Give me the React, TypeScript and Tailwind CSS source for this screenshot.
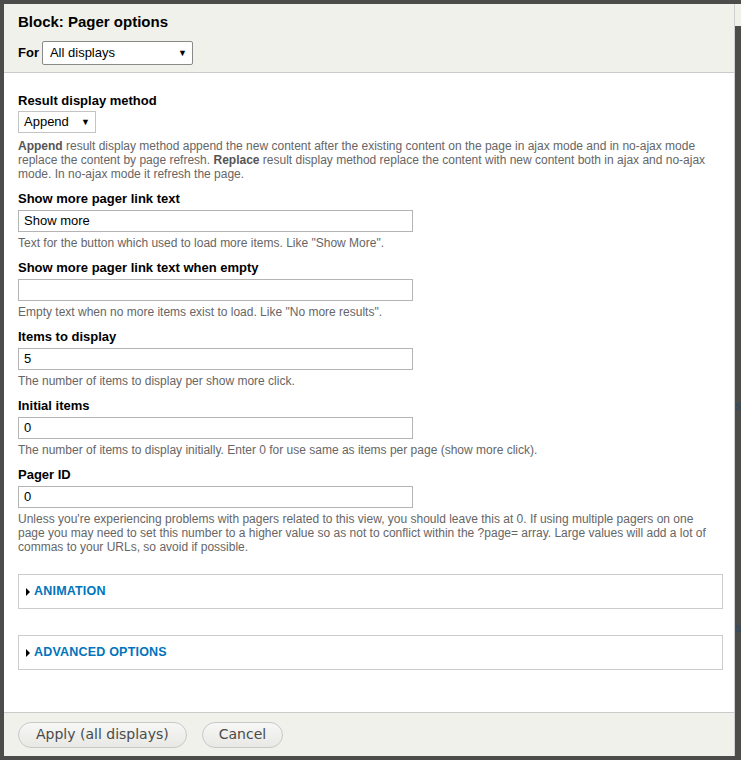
import React from 'react';

type Field = { label: string; value: string; help: string };

const FIELDS: Field[] = [
  { label: 'Show more pager link text', value: 'Show more', help: 'Text for the button which used to load more items. Like "Show More".' },
  { label: 'Show more pager link text when empty', value: '', help: 'Empty text when no more items exist to load. Like "No more results".' },
  { label: 'Items to display', value: '5', help: 'The number of items to display per show more click.' },
  { label: 'Initial items', value: '0', help: 'The number of items to display initially. Enter 0 for use same as items per page (show more click).' },
  {
    label: 'Pager ID',
    value: '0',
    help: "Unless you're experiencing problems with pagers related to this view, you should leave this at 0. If using multiple pagers on one page you may need to set this number to a higher value so as not to conflict within the ?page= array. Large values will add a lot of commas to your URLs, so avoid if possible.",
  },
];

function Caret() {
  return <span className="text-[9px] leading-none">▼</span>;
}

function TextField({ field }: { field: Field }) {
  return (
    <div className="mb-[10px]">
      <label className="block text-[13px] font-bold leading-[16px] text-black mb-[3px]">{field.label}</label>
      <div className="w-[395px] h-[22px] border border-[#b4b4b4] bg-white px-[5px] flex items-center text-[13px] text-black">
        {field.value}
      </div>
      <p className="mt-[4px] text-[12px] leading-[14px] text-[#666]">{field.help}</p>
    </div>
  );
}

function Collapsed({ title }: { title: string }) {
  return (
    <div className="h-[35px] border border-[#ccc] flex items-center pl-[7px] gap-[4px]">
      <span className="w-0 h-0 border-y-[4px] border-y-transparent border-l-[4px] border-l-black" />
      <span className="text-[12.5px] font-bold text-[#0074bd] tracking-[0.2px]">{title}</span>
    </div>
  );
}

export default function App() {
  return (
    <div className="relative w-[741px] h-[760px] bg-[#4c4c4a] overflow-hidden" style={{ fontFamily: '"Liberation Sans", Arial, sans-serif' }}>
      {/* page peeking out behind the modal */}
      <div className="absolute left-[735px] top-[4px] w-[6px] h-[22px] bg-[#f1f1ec]" />
      <span className="absolute left-[735px] top-[397px] text-[12px] text-[#2a4b6e]">s</span>
      <span className="absolute left-[733px] top-[619px] text-[12px] text-[#2a4b6e]">'s</span>

      <div className="absolute left-[4px] top-[4px] w-[731px] h-[752px] flex flex-col bg-white border-r border-[#cfcfcf]">
        <header className="h-[69px] bg-[#f1f1ec] border-b border-[#cacaca] px-[14px] pt-[9px]">
          <h1 className="text-[15px] font-bold leading-[18px] text-black">Block: Pager options</h1>
          <div className="mt-[10px] flex items-center gap-[3px]">
            <span className="text-[13px] font-bold text-black">For</span>
            <div className="w-[151px] h-[24px] rounded-[2px] border border-[#8a8a8a] bg-white pl-[7px] pr-[5px] flex items-center justify-between text-[13px] text-black">
              <span>All displays</span>
              <Caret />
            </div>
          </div>
        </header>

        <main className="flex-1 px-[14px] pt-[20px]">
          <div className="mb-[10px]">
            <label className="block text-[13px] font-bold leading-[16px] text-black mb-[2px]">Result display method</label>
            <div className="w-[78px] h-[22px] border border-[#c4c4c4] bg-white pl-[5px] pr-[5px] flex items-center justify-between text-[13px] text-black">
              <span>Append</span>
              <Caret />
            </div>
            <p className="mt-[6px] text-[12px] leading-[14px] text-[#666] pr-[14px]">
              <b className="text-[#555]">Append</b> result display method append the new content after the existing content on the page in ajax mode and in no-ajax mode replace the content by page refresh. <b className="text-[#555]">Replace</b> result display method replace the content with new content both in ajax and no-ajax mode. In no-ajax mode it refresh the page.
            </p>
          </div>

          {FIELDS.map(f => (
            <TextField key={f.label} field={f} />
          ))}

          <div className="mt-[20px] w-[705px] flex flex-col gap-[26px]">
            <Collapsed title="ANIMATION" />
            <Collapsed title="ADVANCED OPTIONS" />
          </div>
        </main>

        <footer className="h-[44px] bg-[#f1f1ec] border-t border-[#cacaca] px-[14px] flex items-center gap-[15px]" style={{ fontFamily: '"DejaVu Sans", Verdana, sans-serif' }}>
          <button className="h-[26px] px-[17px] rounded-full border border-[#c8c8c8] bg-gradient-to-b from-[#f7f7f5] to-[#e8e8e5] text-[14px] text-[#4a4a4a]">
            Apply (all displays)
          </button>
          <button className="h-[26px] px-[16px] rounded-full border border-[#c8c8c8] bg-gradient-to-b from-[#f7f7f5] to-[#e8e8e5] text-[14px] text-[#4a4a4a]">
            Cancel
          </button>
        </footer>
      </div>
    </div>
  );
}
